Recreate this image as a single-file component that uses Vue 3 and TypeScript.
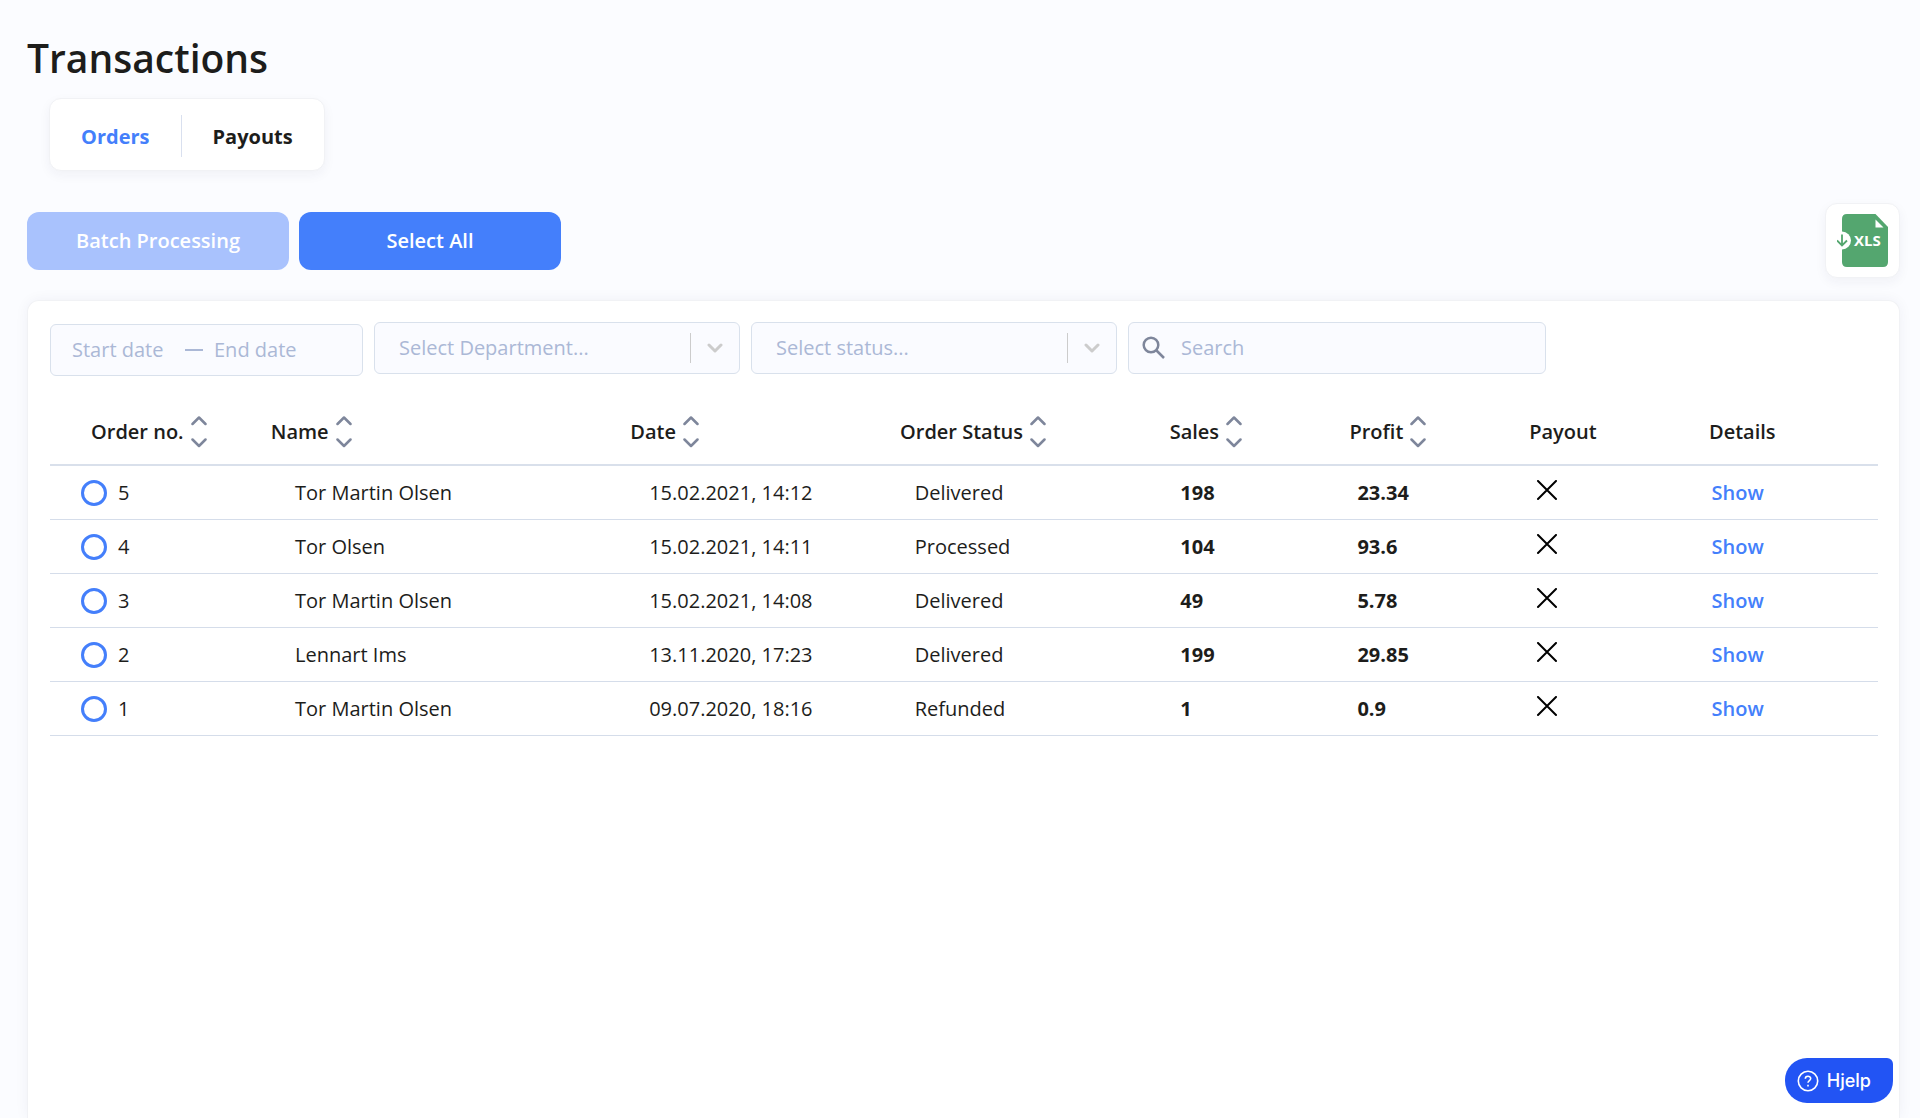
<script setup lang="ts">
import { computed, ref } from 'vue'

interface Order {
  id: number
  name: string
  date: string
  status: string
  sales: string
  profit: string
}

const orders: Order[] = [
  { id: 5, name: 'Tor Martin Olsen', date: '15.02.2021, 14:12', status: 'Delivered', sales: '198', profit: '23.34' },
  { id: 4, name: 'Tor Olsen', date: '15.02.2021, 14:11', status: 'Processed', sales: '104', profit: '93.6' },
  { id: 3, name: 'Tor Martin Olsen', date: '15.02.2021, 14:08', status: 'Delivered', sales: '49', profit: '5.78' },
  { id: 2, name: 'Lennart Ims', date: '13.11.2020, 17:23', status: 'Delivered', sales: '199', profit: '29.85' },
  { id: 1, name: 'Tor Martin Olsen', date: '09.07.2020, 18:16', status: 'Refunded', sales: '1', profit: '0.9' },
]

const columns: { label: string; sortable: boolean }[] = [
  { label: 'Order no.', sortable: true },
  { label: 'Name', sortable: true },
  { label: 'Date', sortable: true },
  { label: 'Order Status', sortable: true },
  { label: 'Sales', sortable: true },
  { label: 'Profit', sortable: true },
  { label: 'Payout', sortable: false },
  { label: 'Details', sortable: false },
]

const tabs = ['Orders', 'Payouts']
const activeTab = ref('Orders')
const selected = ref<number[]>([])
const nothingSelected = computed(() => selected.value.length === 0)

function selectAll(): void {
  selected.value = orders.map((order) => order.id)
}
</script>

<template>
  <main class="page">
    <h1 class="title">Transactions</h1>

    <nav class="tabs" aria-label="Transaction type">
      <button
        v-for="tab in tabs"
        :key="tab"
        type="button"
        class="tab"
        :class="{ active: tab === activeTab }"
        @click="activeTab = tab"
      >
        {{ tab }}
      </button>
    </nav>

    <div class="actions">
      <button type="button" class="action" :disabled="nothingSelected">Batch Processing</button>
      <button type="button" class="action" @click="selectAll">Select All</button>
      <button type="button" class="export">
        <svg width="51" height="54" viewBox="0 0 51 54" aria-hidden="true">
          <path d="M10 0H38.500L51 13V48Q51 53 46 53H10Q5 53 5 48V5Q5 0 10 0Z" fill="#54a66f" />
          <path d="M38.500 5.500V13.500H46.500Z" fill="#fff" />
          <circle cx="5" cy="26.500" r="9" fill="#fff" />
          <path d="M5 20.500V31.500M0 26.500L5 31.500L10 26.500" fill="none" stroke="#54a66f" stroke-width="1.800" />
          <text x="17" y="32" class="export-text">XLS</text>
        </svg>
      </button>
    </div>

    <section class="card">
      <form class="filters" @submit.prevent>
        <div class="field dates">
          <input type="text" class="date" placeholder="Start date" aria-label="Start date" />
          <span class="dash"></span>
          <input type="text" class="date" placeholder="End date" aria-label="End date" />
        </div>
        <div class="field choice">
          <select aria-label="Department">
            <option>Select Department...</option>
          </select>
          <span class="arrow">
            <svg width="16" height="10" viewBox="0 0 16 10"><path d="M2 2L8 8L14 2" /></svg>
          </span>
        </div>
        <div class="field choice">
          <select aria-label="Status">
            <option>Select status...</option>
          </select>
          <span class="arrow">
            <svg width="16" height="10" viewBox="0 0 16 10"><path d="M2 2L8 8L14 2" /></svg>
          </span>
        </div>
        <label class="field search">
          <svg width="24" height="24" viewBox="0 0 24 24" aria-hidden="true">
            <circle cx="9" cy="9" r="7.300" />
            <path d="M14 14L22 22" />
          </svg>
          <input type="search" placeholder="Search" aria-label="Search" />
        </label>
      </form>

      <table class="orders">
        <thead>
          <tr>
            <th v-for="column in columns" :key="column.label" scope="col">
              <button v-if="column.sortable" type="button" class="sort">
                {{ column.label }}
                <svg width="16" height="32" viewBox="0 0 16 32" aria-hidden="true">
                  <path d="M1.500 8L8 1.500L14.500 8M1.500 23.500L8 30L14.500 23.500" />
                </svg>
              </button>
              <template v-else>{{ column.label }}</template>
            </th>
          </tr>
        </thead>
        <tbody>
          <tr v-for="order in orders" :key="order.id">
            <td>
              <label class="pick">
                <input v-model="selected" type="checkbox" :value="order.id" />
                {{ order.id }}
              </label>
            </td>
            <td>{{ order.name }}</td>
            <td>{{ order.date }}</td>
            <td>{{ order.status }}</td>
            <td class="amount">{{ order.sales }}</td>
            <td class="amount">{{ order.profit }}</td>
            <td>
              <svg class="cross" width="26" height="26" viewBox="0 0 26 26" role="img" aria-label="Not paid out">
                <path d="M4 1L22 19M22 1L4 19" />
              </svg>
            </td>
            <td><a href="#" class="show">Show</a></td>
          </tr>
        </tbody>
      </table>
    </section>

    <button type="button" class="help">
      <svg width="22" height="22" viewBox="0 0 22 22" aria-hidden="true">
        <circle cx="11" cy="11" r="9.700" />
        <path d="M8.300 8.800C8.300 5.300 13.700 5.400 13.700 8.600C13.700 10.600 11 10.600 11 12.800" />
        <path d="M11 14.800V16.400" />
      </svg>
      Hjelp
    </button>
  </main>
</template>

<style>
body {
  background: #fbfcff;
}
</style>

<style scoped>
.page {
  box-sizing: border-box;
  display: flex;
  flex-direction: column;
  min-height: 100vh;
  padding: 30px 20px 0 27px;
  color: #1d1d1b;
  font-family: "Open Sans", "Noto Sans", sans-serif;
  font-size: 20px;
  line-height: 28px;
}

button,
input,
select {
  margin: 0;
  padding: 0;
  border: 0;
  background: none;
  color: inherit;
  font: inherit;
}

button {
  cursor: pointer;
}

.title {
  margin: 0;
  font-size: 39px;
  font-weight: 600;
  line-height: 56px;
}

.tabs {
  display: flex;
  align-self: flex-start;
  margin: 12px 0 0 22px;
  padding: 16px 0 13px;
  border: 1px solid #f1f2f5;
  border-radius: 12px;
  background: #fff;
  box-shadow: 0 4px 12px rgba(30, 40, 80, 0.05);
}

.tab {
  height: 42px;
  padding: 1px 31px 0;
  font-weight: 700;
}

.tab + .tab {
  border-left: 1px solid #d9e0ef;
}

.tab.active {
  color: #447ffb;
}

.actions {
  display: flex;
  align-items: center;
  gap: 10px;
  margin-top: 32px;
}

.action {
  width: 262px;
  height: 58px;
  border-radius: 12px;
  background: #447ffb;
  color: #fff;
  font-weight: 600;
}

.action:disabled {
  background: #a9c2fd;
  cursor: default;
}

.export {
  display: flex;
  align-items: center;
  justify-content: center;
  width: 75px;
  height: 75px;
  margin-left: auto;
  border: 1px solid #f1f2f5;
  border-radius: 12px;
  background: #fff;
  box-shadow: 0 4px 12px rgba(30, 40, 80, 0.05);
}

.export-text {
  fill: #fff;
  font-size: 15px;
  font-weight: 700;
}

.card {
  flex: 1;
  margin-top: 22px;
  padding: 21px 21px 0 22px;
  border: 1px solid #f1f2f5;
  border-bottom: 0;
  border-radius: 12px 12px 0 0;
  background: #fff;
  box-shadow: 0 0 14px rgba(30, 40, 80, 0.05);
}

.filters {
  display: flex;
  align-items: flex-start;
  gap: 11px;
}

.field {
  box-sizing: border-box;
  display: flex;
  align-items: center;
  height: 52px;
  border: 1px solid #d9e1ec;
  border-radius: 6px;
  background: #fafbff;
}

.field input {
  min-width: 0;
  outline: 0;
}

.field input::placeholder {
  color: #abb8d6;
  opacity: 1;
}

.dates {
  width: 313px;
  margin-top: 2px;
  padding-left: 21px;
}

.date {
  width: 113px;
}

.dash {
  width: 18px;
  height: 2px;
  margin-right: 11px;
  background: #abb8d6;
}

.choice {
  position: relative;
  width: 366px;
}

.choice select {
  flex: 1;
  height: 100%;
  padding-left: 24px;
  appearance: none;
  color: #abb8d6;
}

.arrow {
  position: absolute;
  right: 0;
  display: flex;
  align-items: center;
  height: 30px;
  padding: 0 16px;
  border-left: 1px solid #ccc;
  pointer-events: none;
}

.arrow path {
  fill: none;
  stroke: #ccc;
  stroke-width: 3;
  stroke-linecap: round;
  stroke-linejoin: round;
}

.search {
  width: 418px;
  padding-left: 13px;
}

.search svg {
  margin-right: 15px;
}

.search circle,
.search path {
  fill: none;
  stroke: #7e869b;
  stroke-width: 2.5;
}

.search input {
  flex: 1;
}

.orders {
  display: block;
  margin-top: 24px;
}

.orders thead,
.orders tbody {
  display: block;
}

.orders tr {
  display: grid;
  grid-template-columns: 100fr 200fr 150fr 150fr 100fr 100fr 100fr 94fr;
  align-items: center;
  box-sizing: border-box;
  height: 54px;
  padding-left: 68px;
  border-bottom: 1px solid #d5ddea;
}

.orders thead tr {
  height: 66px;
  padding-left: 41px;
  border-bottom: 2px solid #d9e0eb;
}

.orders th,
.orders td {
  min-width: 0;
  padding: 0;
  text-align: left;
  white-space: nowrap;
}

.orders th {
  font-weight: 600;
}

.sort {
  display: flex;
  align-items: center;
  gap: 7px;
}

.sort path {
  fill: none;
  stroke: #7e869b;
  stroke-width: 2.5;
  stroke-linecap: round;
  stroke-linejoin: round;
}

.pick {
  display: flex;
  align-items: center;
  gap: 11px;
  margin-left: -37px;
}

.pick input {
  width: 26px;
  height: 26px;
  border: 3px solid #447ffb;
  border-radius: 50%;
  appearance: none;
}

.pick input:checked {
  background: #447ffb;
  box-shadow: inset 0 0 0 3px #fff;
}

.orders .amount {
  font-weight: 700;
}

.cross {
  display: block;
}

.cross path {
  fill: none;
  stroke: #000;
  stroke-width: 2;
  stroke-linecap: round;
}

.show {
  color: #447ffb;
  font-weight: 600;
  text-decoration: none;
}

.help {
  position: fixed;
  right: 27px;
  bottom: 15px;
  display: flex;
  align-items: center;
  gap: 8px;
  height: 45px;
  padding: 0 22px 0 12px;
  border-radius: 22px 6px 22px 22px;
  background: #2254f4;
  color: #fff;
  font-family: Inter, sans-serif;
  font-size: 18px;
  font-weight: 500;
}

.help circle,
.help path {
  fill: none;
  stroke: #fff;
  stroke-width: 1.6;
}
</style>
